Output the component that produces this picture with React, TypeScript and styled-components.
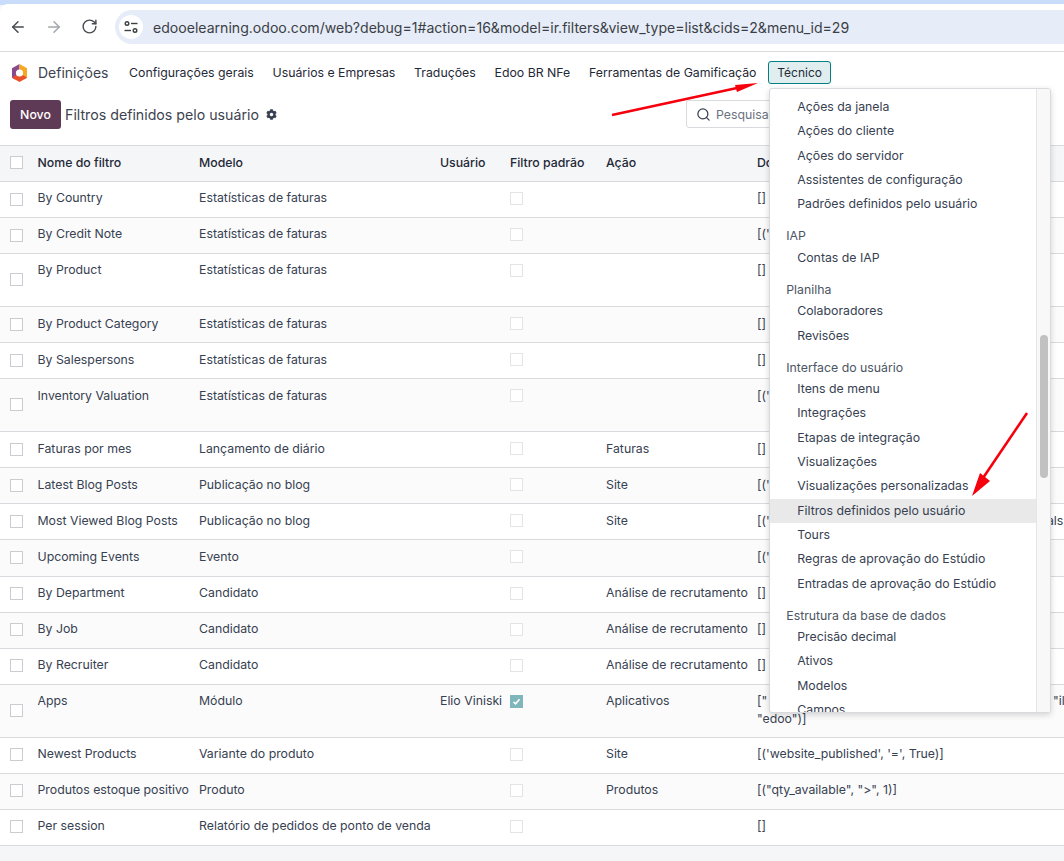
import React from 'react'
import styled, { createGlobalStyle } from 'styled-components'
import { ArrowLeft, ArrowRight, RotateCw, Search } from 'lucide-react'
import { FaCog } from 'react-icons/fa'

const GlobalStyle = createGlobalStyle`
    html, body {
        margin: 0;
        padding: 0;
        background: #ffffff;
    }
    body {
        font-family: Inter, "Noto Sans", sans-serif;
        font-size: 12.3px;
        color: #374151;
    }
    * {
        box-sizing: border-box;
    }
`

const Page = styled.div`
    position: relative;
    width: 1064px;
    height: 861px;
    overflow: hidden;
    background: #f5f6f8;
`

/* browser chrome */
const TopStrip = styled.div`
    height: 5px;
    background: #c9dcf9;
`
const BrowserBar = styled.div`
    display: flex;
    align-items: center;
    height: 48px;
    padding: 0 0 1px 9px;
    margin-top: -1px;
    background: #ffffff;
    border-top-left-radius: 8px;
    border-bottom: 1px solid #d9d9d9;
`
const NavIcons = styled.div`
    display: flex;
    gap: 18px;
    margin-right: 16px;
`
const NavIcon = styled.span<{ $muted?: boolean }>`
    display: flex;
    width: 18px;
    color: ${p => (p.$muted ? '#a3a6ab' : '#474b50')};
`
const UrlPill = styled.div`
    flex: 1;
    display: flex;
    align-items: center;
    gap: 10px;
    height: 34px;
    padding-left: 4px;
    background: #e6ecf8;
    border-radius: 17px 0 0 17px;
`
const SiteInfo = styled.span`
    display: flex;
    align-items: center;
    justify-content: center;
    width: 24px;
    height: 24px;
    border-radius: 50%;
    background: #ffffff;
`
const UrlText = styled.span`
    font-size: 14.08px;
    color: #3b3f45;
    white-space: nowrap;
`

/* odoo navbar */
const NavBar = styled.nav`
    display: flex;
    align-items: center;
    height: 41px;
    padding-left: 10px;
    background: #ffffff;
`
const Logo = styled.svg`
    width: 19px;
    height: 20px;
    margin-right: 9px;
`
const BrandName = styled.span`
    font-size: 14px;
    color: #3d4350;
    margin-right: 11.2px;
`
const NavItem = styled.span`
    padding: 0 9.4px;
    color: #1f2937;
    white-space: nowrap;
`
const TechWrap = styled.div`
    position: relative;
    margin-left: 2.4px;
`
const TechButton = styled.span`
    display: flex;
    align-items: center;
    height: 23px;
    padding: 0 8px;
    font-size: 12px;
    color: #1f2937;
    background: #e0eef0;
    border: 1px solid #017e84;
    border-radius: 3px;
`

/* dropdown */
const Menu = styled.div`
    position: absolute;
    top: 27px;
    left: 1px;
    width: 282px;
    height: 625px;
    display: flex;
    overflow: hidden;
    background: #ffffff;
    border: 1px solid #d8dadd;
    border-radius: 3px;
    box-shadow: 0 2px 6px rgba(0, 0, 0, 0.16);
    z-index: 5;
`
const MenuBody = styled.div`
    flex: 1;
    padding-top: 6px;
`
const MenuHeader = styled.div`
    height: 19.25px;
    margin-top: 10px;
    padding-left: 16px;
    line-height: 20px;
    color: #4b5563;
`
const MenuItem = styled.div<{ $active?: boolean }>`
    height: 24.3px;
    padding-left: 27px;
    line-height: 24.3px;
    color: #374151;
    white-space: nowrap;
    background: ${p => (p.$active ? '#e9e9e9' : 'transparent')};
`
const ScrollTrack = styled.div`
    position: relative;
    width: 14px;
    background: #f8f8f8;
    border-left: 1px solid #e5e5e5;
`
const ScrollThumb = styled.div`
    position: absolute;
    top: 246px;
    left: 3px;
    width: 8px;
    height: 143px;
    border-radius: 4px;
    background: #c1c1c1;
`

/* control panel */
const ControlPanel = styled.div`
    display: flex;
    align-items: center;
    height: 52px;
    padding: 0 0 10px 10px;
    background: #ffffff;
`
const NewButton = styled.button`
    width: 51px;
    height: 29px;
    padding: 0;
    margin-right: 4px;
    border: 0;
    border-radius: 3px;
    background: #5f3a56;
    color: #ffffff;
    font: 500 12.3px Inter, sans-serif;
`
const Title = styled.span`
    font-size: 14.2px;
    color: #3d4350;
`
const Gear = styled.span`
    display: flex;
    margin-left: 7px;
    color: #374151;
`
const SearchBox = styled.div`
    display: flex;
    align-items: center;
    gap: 5px;
    width: 354px;
    height: 28px;
    margin-left: auto;
    margin-right: 24px;
    padding-left: 9px;
    border: 1px solid #d8dadd;
    border-radius: 3px;
    color: #6b7280;
`

/* list */
const COLUMNS = '30.5px 161.5px 241px 70px 96px 151px 314px'

const HeaderRow = styled.div`
    display: grid;
    grid-template-columns: ${COLUMNS};
    align-items: center;
    height: 37px;
    padding-bottom: 2px;
    font-weight: 500;
    color: #1f2937;
    background: #f5f6f8;
    border-top: 1px solid #d8dadd;
    border-bottom: 1px solid #d8dadd;
`
const Row = styled.div<{ $tall?: boolean; $even: boolean }>`
    display: grid;
    grid-template-columns: ${COLUMNS};
    height: ${p => (p.$tall ? '53.2px' : '36.02px')};
    background: ${p => (p.$even ? '#fbfbfb' : '#ffffff')};
    border-bottom: 1px solid #d8dadd;
`
const Cell = styled.div`
    padding: 7.3px 0 0 7px;
    line-height: 18px;
    white-space: nowrap;
`
const HeadCell = styled.div`
    padding-left: 7px;
    white-space: nowrap;
`
const SelectCell = styled.div`
    display: flex;
    align-items: center;
    padding: 0 0 1px 10px;
`
const Box = styled.span<{ $checked?: boolean; $faint?: boolean }>`
    display: flex;
    align-items: center;
    justify-content: center;
    width: 13px;
    height: 13px;
    background: ${p => (p.$checked ? '#7fb6bb' : '#ffffff')};
    border: 1px solid ${p => (p.$checked ? '#7fb6bb' : p.$faint ? '#e2e4e7' : '#c9ccd1')};
`
const DefaultCell = styled(Cell)`
    padding-top: 10px;
`
const ArrowLayer = styled.svg`
    position: absolute;
    top: 0;
    left: 0;
    z-index: 10;
    pointer-events: none;
`

type Filter = {
    name: string
    model: string
    user?: string
    isDefault?: boolean
    action?: string
    domain: React.ReactNode
    tall?: boolean
}

const filters: Filter[] = [
    { name: 'By Country', model: 'Estatísticas de faturas', domain: '[]' },
    { name: 'By Credit Note', model: 'Estatísticas de faturas', domain: "[('move_type', '=', 'out_refund')]" },
    { name: 'By Product', model: 'Estatísticas de faturas', domain: '[]', tall: true },
    { name: 'By Product Category', model: 'Estatísticas de faturas', domain: '[]' },
    { name: 'By Salespersons', model: 'Estatísticas de faturas', domain: '[]' },
    { name: 'Inventory Valuation', model: 'Estatísticas de faturas', domain: "[('state', '=', 'posted')]", tall: true },
    { name: 'Faturas por mes', model: 'Lançamento de diário', action: 'Faturas', domain: '[]' },
    { name: 'Latest Blog Posts', model: 'Publicação no blog', action: 'Site', domain: "[('website_published', '=', True)]" },
    {
        name: 'Most Viewed Blog Posts',
        model: 'Publicação no blog',
        action: 'Site',
        domain: "[('website_published', '=', True), ('visit', '!=', 0), ('vals"
    },
    { name: 'Upcoming Events', model: 'Evento', domain: "[('date_begin', '>', 'now')]" },
    { name: 'By Department', model: 'Candidato', action: 'Análise de recrutamento', domain: '[]' },
    { name: 'By Job', model: 'Candidato', action: 'Análise de recrutamento', domain: '[]' },
    { name: 'By Recruiter', model: 'Candidato', action: 'Análise de recrutamento', domain: '[]' },
    {
        name: 'Apps',
        model: 'Módulo',
        user: 'Elio Viniski',
        isDefault: true,
        action: 'Aplicativos',
        domain: (
            <>
                [" |", ("name", "ilike", "edoo"), ("author_full_name", "ilike",
                <br />
                "edoo")]
            </>
        ),
        tall: true
    },
    { name: 'Newest Products', model: 'Variante do produto', action: 'Site', domain: "[('website_published', '=', True)]" },
    { name: 'Produtos estoque positivo', model: 'Produto', action: 'Produtos', domain: '[("qty_available", ">", 1)]' },
    { name: 'Per session', model: 'Relatório de pedidos de ponto de venda', domain: '[]' }
]

const menuEntries: { header?: string; items: string[] }[] = [
    {
        items: [
            'Ações da janela',
            'Ações do cliente',
            'Ações do servidor',
            'Assistentes de configuração',
            'Padrões definidos pelo usuário'
        ]
    },
    { header: 'IAP', items: ['Contas de IAP'] },
    { header: 'Planilha', items: ['Colaboradores', 'Revisões'] },
    {
        header: 'Interface do usuário',
        items: [
            'Itens de menu',
            'Integrações',
            'Etapas de integração',
            'Visualizações',
            'Visualizações personalizadas',
            'Filtros definidos pelo usuário',
            'Tours',
            'Regras de aprovação do Estúdio',
            'Entradas de aprovação do Estúdio'
        ]
    },
    { header: 'Estrutura da base de dados', items: ['Precisão decimal', 'Ativos', 'Modelos', 'Campos'] }
]

const OdooLogo = () => (
    <Logo viewBox="0 0 19 20">
        <path d="M9.5 1 L2 5.2 V14.8 L5 16.5 L9.5 10 Z" fill="#8a4a8c" />
        <path d="M9.5 1 L17 5.2 V14.8 L14 16.5 L9.5 10 Z" fill="#f6a821" />
        <path d="M2 14.8 L9.5 19 L17 14.8 L9.5 10 Z" fill="#e8502c" />
        <circle cx="9.5" cy="10" r="3.6" fill="#ffffff" />
    </Logo>
)

const SliderIcon = () => (
    <svg width="16" height="14" viewBox="0 0 16 14" fill="none" stroke="#3c4043" strokeWidth="1.4">
        <circle cx="4" cy="3.5" r="1.8" />
        <path d="M8 3.5h6.5" />
        <circle cx="12" cy="10.5" r="1.8" />
        <path d="M1.5 10.5H8" />
    </svg>
)

export default function App() {
    return (
        <Page>
            <GlobalStyle />
            <TopStrip />
            <BrowserBar>
                <NavIcons>
                    <NavIcon><ArrowLeft size={18} /></NavIcon>
                    <NavIcon $muted><ArrowRight size={18} /></NavIcon>
                    <NavIcon><RotateCw size={17} /></NavIcon>
                </NavIcons>
                <UrlPill>
                    <SiteInfo><SliderIcon /></SiteInfo>
                    <UrlText>edooelearning.odoo.com/web?debug=1#action=16&amp;model=ir.filters&amp;view_type=list&amp;cids=2&amp;menu_id=29</UrlText>
                </UrlPill>
            </BrowserBar>
            <NavBar>
                <OdooLogo />
                <BrandName>Definições</BrandName>
                <NavItem>Configurações gerais</NavItem>
                <NavItem>Usuários e Empresas</NavItem>
                <NavItem>Traduções</NavItem>
                <NavItem>Edoo BR NFe</NavItem>
                <NavItem>Ferramentas de Gamificação</NavItem>
                <TechWrap>
                    <TechButton>Técnico</TechButton>
                    <Menu>
                        <MenuBody>
                            {menuEntries.map((group, i) => (
                                <div key={i}>
                                    {group.header && <MenuHeader>{group.header}</MenuHeader>}
                                    {group.items.map(item => (
                                        <MenuItem key={item} $active={item === 'Filtros definidos pelo usuário'}>
                                            {item}
                                        </MenuItem>
                                    ))}
                                </div>
                            ))}
                        </MenuBody>
                        <ScrollTrack><ScrollThumb /></ScrollTrack>
                    </Menu>
                </TechWrap>
            </NavBar>
            <ControlPanel>
                <NewButton>Novo</NewButton>
                <Title>Filtros definidos pelo usuário</Title>
                <Gear><FaCog size={11} /></Gear>
                <SearchBox>
                    <Search size={15} color="#374151" />
                    Pesquisar...
                </SearchBox>
            </ControlPanel>
            <HeaderRow>
                <SelectCell><Box /></SelectCell>
                <HeadCell>Nome do filtro</HeadCell>
                <HeadCell>Modelo</HeadCell>
                <HeadCell>Usuário</HeadCell>
                <HeadCell>Filtro padrão</HeadCell>
                <HeadCell>Ação</HeadCell>
                <HeadCell>Domínio</HeadCell>
            </HeaderRow>
            {filters.map((f, i) => (
                <Row key={f.name} $tall={f.tall} $even={i % 2 === 1}>
                    <SelectCell><Box /></SelectCell>
                    <Cell>{f.name}</Cell>
                    <Cell>{f.model}</Cell>
                    <Cell>{f.user}</Cell>
                    <DefaultCell>
                        <Box $faint $checked={f.isDefault}>
                            {f.isDefault && (
                                <svg width="9" height="9" viewBox="0 0 9 9" fill="none" stroke="#ffffff" strokeWidth="1.6">
                                    <path d="M1.5 4.8 3.6 6.8 7.5 2.2" />
                                </svg>
                            )}
                        </Box>
                    </DefaultCell>
                    <Cell>{f.action}</Cell>
                    <Cell>{f.domain}</Cell>
                </Row>
            ))}
            <ArrowLayer width="1064" height="861" viewBox="0 0 1064 861">
                <path d="M612 115 L737 88" stroke="#f5000c" strokeWidth="2.6" />
                <path d="M758 83 L735 85 L737 92 Z" fill="#f5000c" />
                <path d="M1027 413 L983 478" stroke="#f5000c" strokeWidth="2.6" />
                <path d="M972 496 L980 473 L990 481 Z" fill="#f5000c" />
            </ArrowLayer>
        </Page>
    )
}
